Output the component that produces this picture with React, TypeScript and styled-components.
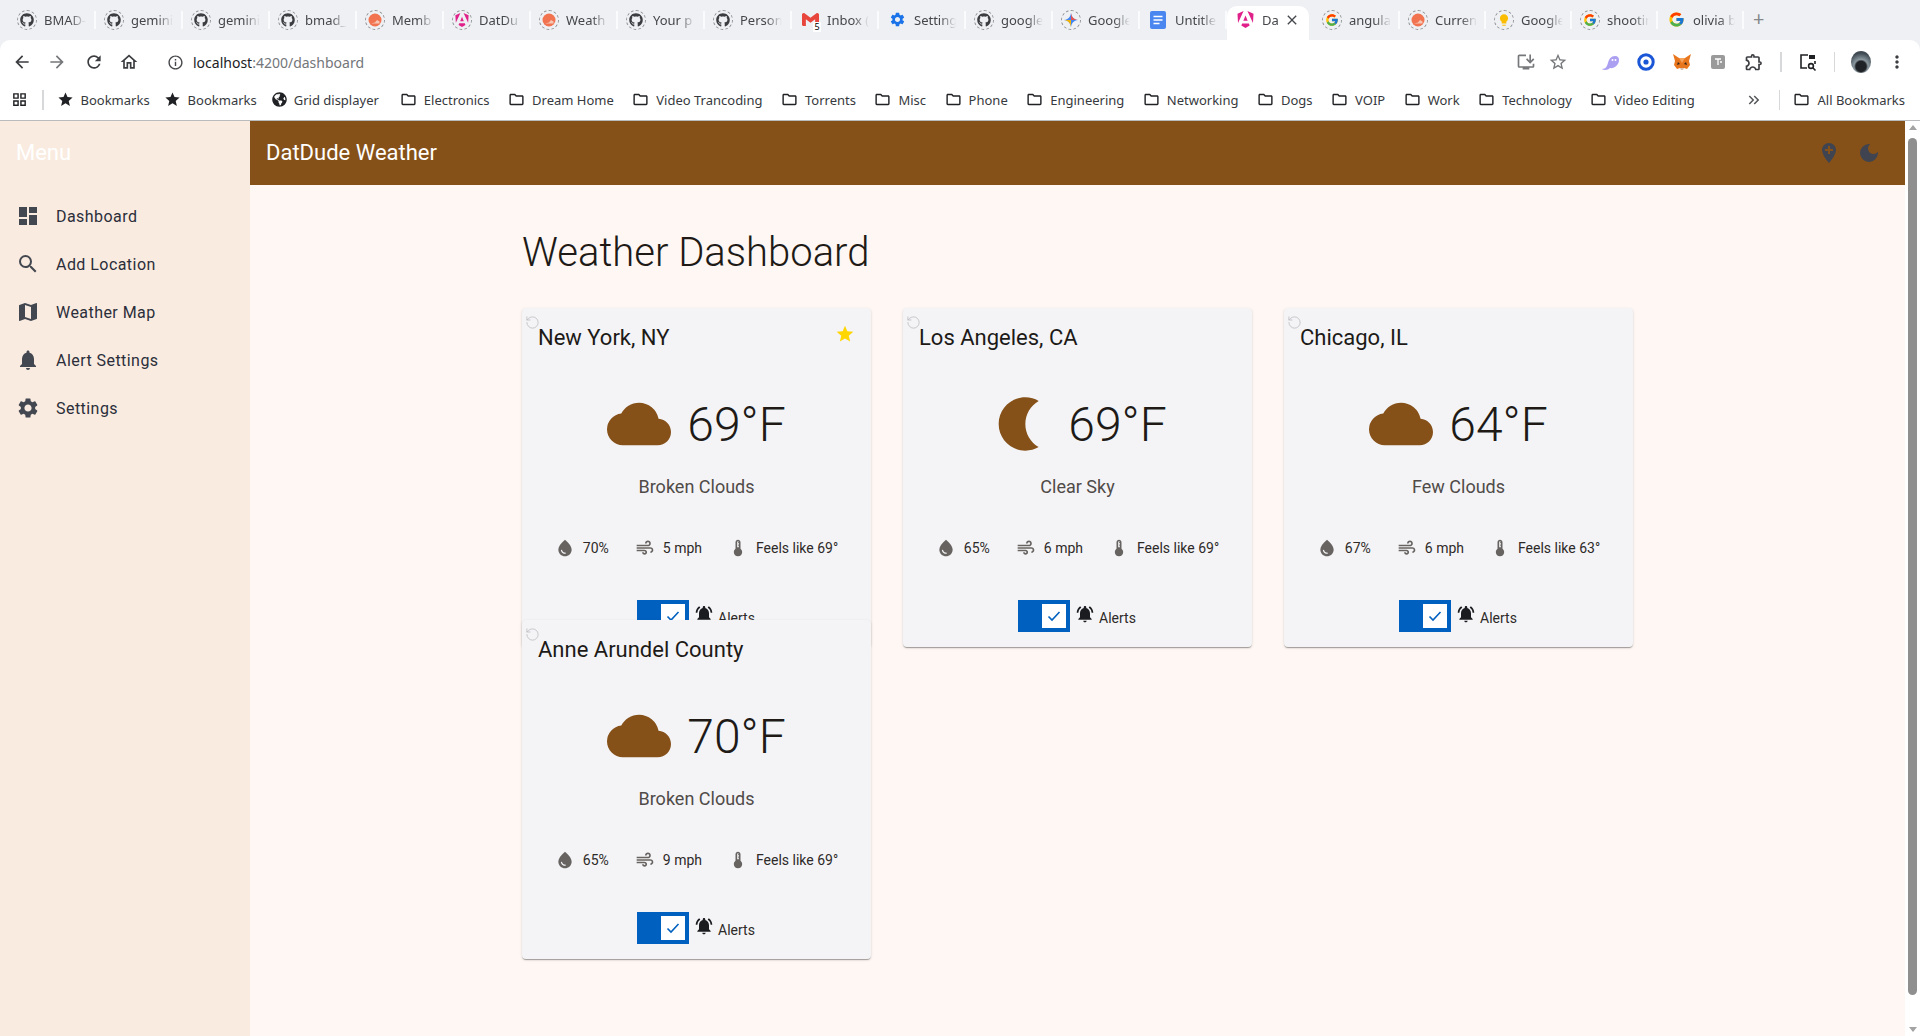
import React from 'react';
import styled, { createGlobalStyle } from 'styled-components';
import { FaGithub, FaGlobeAmericas } from 'react-icons/fa';
import { FcGoogle } from 'react-icons/fc';
import { SiAngular, SiGmail } from 'react-icons/si';
import { RotateCcw } from 'lucide-react';
import {
  MdAddLocation,
  MdAir,
  MdArrowBack,
  MdArrowForward,
  MdBrightness2,
  MdClose,
  MdCloud,
  MdDarkMode,
  MdDashboard,
  MdDeviceThermostat,
  MdInfoOutline,
  MdKeyboardDoubleArrowRight,
  MdLightbulb,
  MdMap,
  MdMoreVert,
  MdNotifications,
  MdNotificationsActive,
  MdOutlineExtension,
  MdOutlineFolder,
  MdOutlineGridView,
  MdOutlineHome,
  MdOutlineInstallDesktop,
  MdRefresh,
  MdSearch,
  MdSettings,
  MdStar,
  MdStarBorder,
  MdWaterDrop,
} from 'react-icons/md';

const GlobalStyle = createGlobalStyle`
  html, body {
    margin: 0;
    height: 100%;
    overflow: hidden;
    font-family: Roboto, "Liberation Sans", sans-serif;
  }
  * {
    box-sizing: border-box;
  }
`;

const Window = styled.div`
  display: flex;
  flex-direction: column;
  width: 1920px;
  height: 1036px;
  background: #eef0f3;
`;

/* browser chrome */

const TabStrip = styled.div`
  display: flex;
  align-items: flex-end;
  height: 40px;
  padding-left: 9px;
  font-family: 'Noto Sans', sans-serif;
`;

const Tab = styled.div<{ $active?: boolean; $narrow?: boolean }>`
  position: relative;
  flex: 0 0 ${({ $active, $narrow }) => ($active ? '82px' : $narrow ? '86px' : '87px')};
  margin-right: ${({ $active }) => ($active ? '5px' : '0')};
  height: 34px;
  display: flex;
  align-items: center;
  gap: 7px;
  padding: 0 0 7px 8px;
  border-radius: 10px 10px 0 0;
  background: ${({ $active }) => ($active ? '#fff' : 'transparent')};
  font-size: 13px;
  color: #45474a;

  &::after {
    content: '';
    display: ${({ $active }) => ($active ? 'none' : 'block')};
    position: absolute;
    right: 0;
    top: 5px;
    height: 18px;
    width: 2px;
    background: #fafbfc;
  }
`;

const TabIconRing = styled.span<{ $ring: boolean }>`
  position: relative;
  flex: 0 0 20px;
  height: 20px;
  display: flex;
  align-items: center;
  justify-content: center;
  border-radius: 50%;
  border: 1.5px ${({ $ring }) => ($ring ? 'dashed #8d8f92' : 'solid transparent')};
  font-size: ${({ $ring }) => ($ring ? '14px' : '17px')};
`;

const TabLabel = styled.span`
  width: 42px;
  overflow: hidden;
  white-space: nowrap;
  -webkit-mask-image: linear-gradient(to right, #000 62%, transparent 100%);
  mask-image: linear-gradient(to right, #000 62%, transparent 100%);
`;

const TabClose = styled.span`
  position: absolute;
  right: 9px;
  top: 6px;
  font-size: 16px;
  display: flex;
  color: #45474a;
`;

const GmailBadge = styled.span`
  position: absolute;
  right: -2px;
  bottom: -3px;
  width: 8px;
  height: 10px;
  background: #fff;
  color: #000;
  font-size: 9px;
  line-height: 10px;
  text-align: center;
`;

const NewTab = styled.span`
  margin: 0 0 11px 9px;
  font-size: 20px;
  color: #85878a;
  line-height: 20px;
`;

const Toolbar = styled.div`
  height: 42px;
  display: flex;
  align-items: center;
  padding: 2px 5px 0 12px;
  background: #fff;
  border-radius: 10px 10px 0 0;
  font-family: 'Noto Sans', sans-serif;
`;

const ChromeButton = styled.span<{ $muted?: boolean; $width?: number }>`
  width: ${({ $width }) => $width ?? 36}px;
  display: flex;
  justify-content: center;
  font-size: 20px;
  color: ${({ $muted }) => ($muted ? '#75777a' : '#3b3d40')};
`;

const Address = styled.div`
  flex: 1;
  display: flex;
  align-items: center;
  gap: 9px;
  margin-left: 15px;
  font-size: 14px;
  color: #73767a;

  svg {
    font-size: 17px;
    color: #45474a;
  }

  b {
    font-weight: 400;
    color: #202124;
  }
`;

const ToolbarDivider = styled.span`
  width: 1.5px;
  height: 20px;
  margin: 0 8px;
  background: #d7d8da;
`;

const Avatar = styled.span`
  width: 20px;
  height: 22px;
  margin: 0 8px;
  border-radius: 50%;
  background: radial-gradient(circle at 50% 70%, #1f2226 0 28%, #8c99a0 38%, #3f4a52 72%);
`;

const BookmarkBar = styled.div`
  height: 39px;
  display: flex;
  align-items: center;
  padding: 0 13px 3px 11px;
  background: #fff;
  border-bottom: 1px solid #b9bbbd;
  font-family: 'Noto Sans', sans-serif;
  font-size: 13px;
  color: #36393d;
`;

const BarDivider = styled.span<{ $left?: number }>`
  width: 1.5px;
  height: 20px;
  margin: 0 13px 0 ${({ $left }) => $left ?? 13}px;
  background: #d7d8da;
`;

const Bookmark = styled.span<{ $after?: number; $icon?: number }>`
  display: flex;
  align-items: center;
  gap: 7px;
  margin-right: ${({ $after }) => $after ?? 18.5}px;
  white-space: nowrap;

  svg {
    flex: none;
    font-size: ${({ $icon }) => $icon ?? 17}px;
    color: #202124;
  }
`;

const Overflow = styled.span`
  display: flex;
  margin-left: auto;
  font-size: 18px;
  color: #55575a;
`;

/* app */

const AppFrame = styled.div`
  flex: 1;
  min-height: 0;
  display: flex;
  background: #fff7f3;
`;

const Sidebar = styled.aside`
  flex: 0 0 250px;
  background: #f9ebe0;
`;

const SidebarTitle = styled.div`
  height: 64px;
  padding: 0 0 2px 16px;
  display: flex;
  align-items: center;
  color: #fff;
  font-size: 22px;
  margin-bottom: 7px;
`;

const NavItem = styled.div`
  height: 48px;
  display: flex;
  align-items: center;
  gap: 16px;
  padding-left: 16px;
  font-size: 16px;
  letter-spacing: 0.45px;
  color: #2b2e3a;

  svg {
    font-size: 24px;
    color: #43474f;
  }
`;

const Content = styled.div`
  flex: 1;
  min-width: 0;
  display: flex;
  flex-direction: column;
`;

const AppHeader = styled.header`
  flex: 0 0 64px;
  display: flex;
  align-items: center;
  justify-content: space-between;
  padding: 0 24px 2px 16px;
  background: #865119;
  color: #fff;
  font-size: 22px;
  font-weight: 400;
`;

const HeaderIcons = styled.div`
  display: flex;
  gap: 16px;
  margin-top: 2px;
  font-size: 24px;
  color: #3f4450;

  svg {
    display: block;
  }
`;

const Main = styled.main`
  flex: 1;
  width: 1111px;
  margin: 0 auto;
  padding-top: 44px;
`;

const PageTitle = styled.h1`
  margin: 0 0 31px;
  font-size: 40px;
  line-height: 48px;
  font-weight: 300;
  color: #201a17;
`;

const CardGrid = styled.div`
  display: grid;
  grid-template-columns: repeat(3, 349px);
  grid-auto-rows: 280px;
  gap: 32px;
`;

const Card = styled.section`
  position: relative;
  height: 339px;
  padding: 17px 16px 16px;
  display: flex;
  flex-direction: column;
  border-radius: 4px;
  background: #f4f4f7;
  box-shadow: 0 2px 1px -1px rgba(0, 0, 0, 0.2), 0 1px 1px rgba(0, 0, 0, 0.14), 0 1px 3px rgba(0, 0, 0, 0.12);
`;

const RefreshMark = styled.span`
  position: absolute;
  left: 3px;
  top: 7px;
  display: flex;
  color: #bdbdc0;
`;

const FavoriteStar = styled.span`
  position: absolute;
  right: 16px;
  top: 16px;
  display: flex;
  font-size: 20px;
  color: #ffd600;
`;

const CardTitle = styled.h2`
  margin: 0 0 41px;
  font-size: 22px;
  line-height: 26px;
  font-weight: 400;
  color: #201a17;
`;

const Reading = styled.div`
  display: flex;
  align-items: center;
  justify-content: center;
  gap: 16px;
  height: 64px;
  color: #865119;
`;

const MoonIcon = styled(MdBrightness2)`
  transform: scaleX(-1);
`;

const Temperature = styled.span`
  font-size: 48px;
  font-weight: 300;
  color: #201a17;
`;

const Condition = styled.p`
  margin: 19px 0 0;
  text-align: center;
  font-size: 18px;
  line-height: 24px;
  color: #504b48;
`;

const Details = styled.div`
  margin-top: 39px;
  display: flex;
  justify-content: center;
  gap: 26px;
  height: 20px;
  font-size: 14px;
  color: #2e2a27;
`;

const Detail = styled.span`
  display: flex;
  align-items: center;
  gap: 8px;

  svg {
    font-size: 20px;
    color: #676360;
  }
`;

const AlertRow = styled.div`
  margin-top: 42px;
  padding-right: 1px;
  display: flex;
  justify-content: center;
  align-items: center;
  font-size: 14px;
  color: #2e2a27;
`;

const Toggle = styled.span`
  width: 52px;
  height: 32px;
  padding: 4px;
  display: flex;
  justify-content: flex-end;
  background: #0060bf;
`;

const ToggleThumb = styled.span`
  width: 24px;
  height: 24px;
  display: flex;
  align-items: center;
  justify-content: center;
  background: #fff;
`;

const BellIcon = styled(MdNotificationsActive)`
  margin: 0 4px 4px 5px;
  font-size: 20px;
  color: #1a1c1f;
`;

const AlertLabel = styled.span`
  margin-top: 4px;
`;

const Scrollbar = styled.div`
  flex: 0 0 15px;
  display: flex;
  flex-direction: column;
  align-items: center;
  background: #fff;
  padding: 4px 2px;

  &::before,
  &::after {
    content: '';
    flex: none;
    border-left: 4px solid transparent;
    border-right: 4px solid transparent;
  }

  &::before {
    border-bottom: 5px solid #a3a3a3;
  }

  &::after {
    border-top: 5px solid #a3a3a3;
  }
`;

const ScrollThumb = styled.div`
  flex: 1;
  width: 9px;
  margin: 8px 0 32px;
  border-radius: 5px;
  background: #8f8f8f;
`;

const SvgIcon = styled.svg`
  display: block;
`;

const ColorIcon = styled.span<{ $color: string }>`
  display: flex;
  color: ${({ $color }) => $color};
`;

const WeatherFavicon = () => (
  <SvgIcon width="14" height="14" viewBox="0 0 14 14">
    <circle cx="7" cy="7" r="6.5" fill="#f2734f" />
    <path d="M3 10.5h8.5v-2L9 7 7 9.5z" fill="#f7c7b5" />
  </SvgIcon>
);

const GeminiFavicon = () => (
  <SvgIcon width="14" height="14" viewBox="0 0 14 14">
    <path d="M7 0c.6 4 2.6 6.2 7 7-4.4.8-6.4 3-7 7-.6-4-2.6-6.2-7-7 4.4-.8 6.4-3 7-7z" fill="#4285f4" />
    <path d="M7 0c.6 4 2.6 6.2 7 7H7z" fill="#e8554e" />
    <path d="M7 14c-.6-4-2.6-6.2-7-7h7z" fill="#f4b400" />
  </SvgIcon>
);

const DocsFavicon = () => (
  <SvgIcon width="16" height="18" viewBox="0 0 16 18">
    <rect width="16" height="18" rx="2" fill="#4a86f0" />
    <path d="M3.5 5.5h9M3.5 9h9M3.5 12.5h6" stroke="#fff" strokeWidth="1.6" />
  </SvgIcon>
);

const PhantomIcon = () => (
  <SvgIcon width="20" height="20" viewBox="0 0 20 20">
    <path d="M2 17c4 0 5-3 6-6 1-4 3-7 7-7 3 0 4 2 4 4 0 5-5 9-9 8-1 1-3 2-5 2-2 0-3-1-3-1z" fill="#ab9ff2" />
    <circle cx="12.5" cy="8" r="1" fill="#fff" />
    <circle cx="15.5" cy="8" r="1" fill="#fff" />
  </SvgIcon>
);

const RingIcon = () => (
  <SvgIcon width="18" height="18" viewBox="0 0 18 18">
    <circle cx="9" cy="9" r="7.2" fill="#fff" stroke="#1a56d6" strokeWidth="3" />
    <circle cx="9" cy="9" r="2.6" fill="#1a56d6" />
  </SvgIcon>
);

const FoxIcon = () => (
  <SvgIcon width="20" height="20" viewBox="0 0 20 20">
    <path d="M1 2l6 4h6l6-4-2 7 1 4-3 4-3-1H8l-3 1-3-4 1-4z" fill="#e8761e" />
    <path d="M7 6l3 5 3-5z" fill="#f6a35c" />
    <path d="M6 10l2 2-3 1zM14 10l-2 2 3 1z" fill="#33261c" />
    <path d="M8 16h4l-1 2H9z" fill="#d7c1b3" />
  </SvgIcon>
);

const TiIcon = () => (
  <SvgIcon width="16" height="16" viewBox="0 0 16 16">
    <rect width="14" height="14" x="1" y="1" rx="2" fill="#9a9a9a" />
    <path d="M5 5h6M8 5v6M10 8h2" stroke="#fff" strokeWidth="1.3" />
  </SvgIcon>
);

const TabSearchIcon = () => (
  <SvgIcon width="20" height="20" viewBox="0 0 20 20">
    <path d="M10 3H3v13h6" fill="none" stroke="#202124" strokeWidth="1.6" />
    <path d="M11 3h6v4h-6z" fill="#202124" />
    <path d="M17 9v3" stroke="#202124" strokeWidth="1.6" />
    <circle cx="13" cy="14" r="2.4" fill="none" stroke="#202124" strokeWidth="1.6" />
    <path d="M15 16l2.5 2.5" stroke="#202124" strokeWidth="1.6" />
  </SvgIcon>
);

type TabData = {
  label: string;
  icon: React.ReactNode;
  ring?: boolean;
};

const github = <FaGithub color="#3b3d40" />;
const google = <FcGoogle />;
const angular = <ColorIcon $color="#e0218a"><SiAngular /></ColorIcon>;

const tabs: TabData[] = [
  { label: 'BMAD-', icon: github, ring: true },
  { label: 'gemini', icon: github, ring: true },
  { label: 'gemini', icon: github, ring: true },
  { label: 'bmad_', icon: github, ring: true },
  { label: 'Memb', icon: <WeatherFavicon />, ring: true },
  { label: 'DatDu', icon: angular, ring: true },
  { label: 'Weath', icon: <WeatherFavicon />, ring: true },
  { label: 'Your p', icon: github, ring: true },
  { label: 'Person', icon: github, ring: true },
  {
    label: 'Inbox (',
    icon: (
      <>
        <ColorIcon $color="#e8453c"><SiGmail /></ColorIcon>
        <GmailBadge>5</GmailBadge>
      </>
    ),
  },
  { label: 'Setting', icon: <ColorIcon $color="#1a73e8"><MdSettings /></ColorIcon> },
  { label: 'google', icon: github, ring: true },
  { label: 'Google', icon: <GeminiFavicon />, ring: true },
  { label: 'Untitle', icon: <DocsFavicon /> },
];

const tabsAfter: TabData[] = [
  { label: 'angula', icon: google, ring: true },
  { label: 'Curren', icon: <WeatherFavicon />, ring: true },
  { label: 'Google', icon: <ColorIcon $color="#fbbc04"><MdLightbulb /></ColorIcon>, ring: true },
  { label: 'shootin', icon: google, ring: true },
  { label: 'olivia b', icon: google },
];

const folders = [
  'Electronics',
  'Dream Home',
  'Video Trancoding',
  'Torrents',
  'Misc',
  'Phone',
  'Engineering',
  'Networking',
  'Dogs',
  'VOIP',
  'Work',
  'Technology',
  'Video Editing',
];

const navItems = [
  { label: 'Dashboard', icon: <MdDashboard /> },
  { label: 'Add Location', icon: <MdSearch /> },
  { label: 'Weather Map', icon: <MdMap /> },
  { label: 'Alert Settings', icon: <MdNotifications /> },
  { label: 'Settings', icon: <MdSettings /> },
];

type Weather = {
  city: string;
  temp: number;
  condition: string;
  humidity: number;
  wind: number;
  feels: number;
  night?: boolean;
  favorite?: boolean;
};

const locations: Weather[] = [
  { city: 'New York, NY', temp: 69, condition: 'Broken Clouds', humidity: 70, wind: 5, feels: 69, favorite: true },
  { city: 'Los Angeles, CA', temp: 69, condition: 'Clear Sky', humidity: 65, wind: 6, feels: 69, night: true },
  { city: 'Chicago, IL', temp: 64, condition: 'Few Clouds', humidity: 67, wind: 6, feels: 63 },
  { city: 'Anne Arundel County', temp: 70, condition: 'Broken Clouds', humidity: 65, wind: 9, feels: 69 },
];

const WeatherCard = ({ city, temp, condition, humidity, wind, feels, night, favorite }: Weather) => (
  <Card>
    <RefreshMark>
      <RotateCcw size={15} strokeWidth={1.3} />
    </RefreshMark>
    {favorite && (
      <FavoriteStar>
        <MdStar />
      </FavoriteStar>
    )}
    <CardTitle>{city}</CardTitle>
    <Reading>
      {night ? <MoonIcon size={64} /> : <MdCloud size={64} />}
      <Temperature>{temp}°F</Temperature>
    </Reading>
    <Condition>{condition}</Condition>
    <Details>
      <Detail>
        <MdWaterDrop />
        {humidity}%
      </Detail>
      <Detail>
        <MdAir />
        {wind} mph
      </Detail>
      <Detail>
        <MdDeviceThermostat />
        Feels like {feels}°
      </Detail>
    </Details>
    <AlertRow>
      <Toggle>
        <ToggleThumb>
          <svg width="16" height="16" viewBox="0 0 16 16">
            <path d="M2.5 8.5l3.5 3.5 7.5-8" fill="none" stroke="#0060bf" strokeWidth="1.6" />
          </svg>
        </ToggleThumb>
      </Toggle>
      <BellIcon />
      <AlertLabel>Alerts</AlertLabel>
    </AlertRow>
  </Card>
);

const TabItem = ({ label, icon, ring, narrow }: TabData & { narrow?: boolean }) => (
  <Tab $narrow={narrow}>
    <TabIconRing $ring={!!ring}>{icon}</TabIconRing>
    <TabLabel>{label}</TabLabel>
  </Tab>
);

const App = () => (
  <Window>
    <GlobalStyle />
    <TabStrip>
      {tabs.map((tab, i) => (
        <TabItem key={i} {...tab} />
      ))}
      <Tab $active>
        <TabIconRing $ring={false}>{angular}</TabIconRing>
        <TabLabel>Da</TabLabel>
        <TabClose>
          <MdClose />
        </TabClose>
      </Tab>
      {tabsAfter.map((tab, i) => (
        <TabItem key={i} {...tab} narrow />
      ))}
      <NewTab>+</NewTab>
    </TabStrip>
    <Toolbar>
      <ChromeButton $width={20}><MdArrowBack /></ChromeButton>
      <ChromeButton $muted $width={50}><MdArrowForward /></ChromeButton>
      <ChromeButton $width={24}><MdRefresh /></ChromeButton>
      <ChromeButton $width={46}><MdOutlineHome /></ChromeButton>
      <Address>
        <MdInfoOutline />
        <span>
          <b>localhost</b>:4200/dashboard
        </span>
      </Address>
      <ChromeButton $muted $width={32}><MdOutlineInstallDesktop /></ChromeButton>
      <ChromeButton $muted $width={32}><MdStarBorder /></ChromeButton>
      <ChromeButton $width={18} />
      <ChromeButton $width={36}><PhantomIcon /></ChromeButton>
      <ChromeButton $width={36}><RingIcon /></ChromeButton>
      <ChromeButton $width={36}><FoxIcon /></ChromeButton>
      <ChromeButton $width={36}><TiIcon /></ChromeButton>
      <ChromeButton $width={36}><MdOutlineExtension /></ChromeButton>
      <ToolbarDivider />
      <ChromeButton $width={36}><TabSearchIcon /></ChromeButton>
      <ToolbarDivider />
      <Avatar />
      <ChromeButton $width={36}><MdMoreVert /></ChromeButton>
    </Toolbar>
    <BookmarkBar>
      <Bookmark $after={1}>
        <MdOutlineGridView />
      </Bookmark>
      <BarDivider />
      <Bookmark $after={14}>
        <MdStar />
        Bookmarks
      </Bookmark>
      <Bookmark $after={15}>
        <MdStar />
        Bookmarks
      </Bookmark>
      <Bookmark $after={21} $icon={15}>
        <FaGlobeAmericas />
        Grid displayer
      </Bookmark>
      {folders.map((name) => (
        <Bookmark key={name}>
          <MdOutlineFolder />
          {name}
        </Bookmark>
      ))}
      <Overflow>
        <MdKeyboardDoubleArrowRight />
      </Overflow>
      <BarDivider $left={16} />
      <Bookmark $after={2}>
        <MdOutlineFolder />
        All Bookmarks
      </Bookmark>
    </BookmarkBar>
    <AppFrame>
      <Sidebar>
        <SidebarTitle>Menu</SidebarTitle>
        {navItems.map((item) => (
          <NavItem key={item.label}>
            {item.icon}
            {item.label}
          </NavItem>
        ))}
      </Sidebar>
      <Content>
        <AppHeader>
          DatDude Weather
          <HeaderIcons>
            <MdAddLocation />
            <MdDarkMode />
          </HeaderIcons>
        </AppHeader>
        <Main>
          <PageTitle>Weather Dashboard</PageTitle>
          <CardGrid>
            {locations.map((loc) => (
              <WeatherCard key={loc.city} {...loc} />
            ))}
          </CardGrid>
        </Main>
      </Content>
      <Scrollbar>
        <ScrollThumb />
      </Scrollbar>
    </AppFrame>
  </Window>
);

export default App;
